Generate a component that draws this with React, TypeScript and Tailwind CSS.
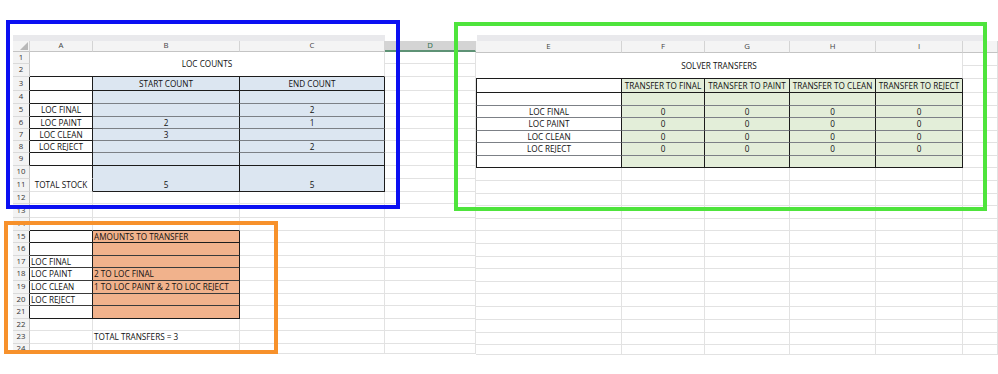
import React from 'react';

// border colour lookups (right / bottom)
const R: Record<string, string> = {
  g: 'border-r-[#e2e2e2]',
  k: 'border-r-[#1c1c1c]',
  n: 'border-r-transparent',
};
const B: Record<string, string> = {
  g: 'border-b-[#e2e2e2]',
  k: 'border-b-[#1c1c1c]',
  m: 'border-b-[#7c8086]',
  d: 'border-b-[#3a3a3a]',
  n: 'border-b-transparent',
};

const BLUE = 'bg-[#dce6f1]';
const GREEN = 'bg-[#e3eed9]';
const ORANGE = 'bg-[#f1b28c]';
const LEFT = 'items-center justify-start pl-[1px]';

type CellProps = {
  w: string;
  h: string;
  r?: string;
  b?: string;
  bg?: string;
  al?: string;
  l?: boolean;
  children?: React.ReactNode;
};

function Cell({ w, h, r = 'g', b = 'g', bg = 'bg-white', al = 'items-center justify-center', l, children }: CellProps) {
  return (
    <div
      className={`flex shrink-0 overflow-hidden whitespace-nowrap leading-[10px] border-r border-b ${R[r]} ${B[b]} ${
        l ? 'border-l border-l-[#1c1c1c]' : ''
      } ${w} ${h} ${bg} ${al}`}
    >
      {children}
    </div>
  );
}

function Num({ n, h, edge }: { n: number; h: string; edge?: boolean }) {
  return (
    <div
      className={`flex shrink-0 items-center justify-center w-[17px] ${h} border-r border-b border-b-[#dadada] ${
        edge ? 'border-r-[#1c1c1c]' : 'border-r-[#c6c6c6]'
      } bg-[#f3f3f3] text-[7.8px] text-[#333]`}
    >
      {n}
    </div>
  );
}

function Head({ w, h, t, sel }: { w: string; h: string; t: string; sel?: boolean }) {
  return (
    <div
      className={`flex shrink-0 items-center justify-center ${w} ${h} border-r border-r-[#d4d4d4] ${
        sel ? 'bg-[#d4d4d4] text-[#2f6e4b] border-b-2 border-b-[#5e9275]' : 'bg-[#f4f4f4] text-[#444] border-b border-b-[#c4c4c4]'
      } text-[7.8px]`}
    >
      {t}
    </div>
  );
}

type LC = { t?: string; r?: string; b?: string; bg?: string; al?: string };
type LRow = { n: number; h: string; edge?: boolean; a?: LC; bb?: LC; c?: LC };

const WA = 'w-[63px]';
const WB = 'w-[147px]';
const WC = 'w-[145px]';
const WD = 'w-[91px]';

const upper: LRow[] = [
  { n: 3, h: 'h-[14px]', edge: true, a: { r: 'k', b: 'k' }, bb: { t: 'START COUNT', r: 'k', b: 'k', bg: BLUE }, c: { t: 'END COUNT', r: 'k', b: 'k', bg: BLUE } },
  { n: 4, h: 'h-[13px]', edge: true, a: { r: 'k', b: 'k' }, bb: { r: 'k', b: 'm', bg: BLUE }, c: { r: 'k', b: 'm', bg: BLUE } },
  { n: 5, h: 'h-[13px]', edge: true, a: { t: 'LOC FINAL', r: 'k', b: 'k' }, bb: { r: 'k', b: 'm', bg: BLUE }, c: { t: '2', r: 'k', b: 'm', bg: BLUE } },
  { n: 6, h: 'h-[12px]', edge: true, a: { t: 'LOC PAINT', r: 'k', b: 'k' }, bb: { t: '2', r: 'k', b: 'm', bg: BLUE }, c: { t: '1', r: 'k', b: 'm', bg: BLUE } },
  { n: 7, h: 'h-[12px]', edge: true, a: { t: 'LOC CLEAN', r: 'k', b: 'k' }, bb: { t: '3', r: 'k', b: 'm', bg: BLUE }, c: { r: 'k', b: 'm', bg: BLUE } },
  { n: 8, h: 'h-[12px]', edge: true, a: { t: 'LOC REJECT', r: 'k', b: 'k' }, bb: { r: 'k', b: 'm', bg: BLUE }, c: { t: '2', r: 'k', b: 'm', bg: BLUE } },
  { n: 9, h: 'h-[13px]', edge: true, a: { r: 'k', b: 'k' }, bb: { r: 'k', b: 'k', bg: BLUE }, c: { r: 'k', b: 'k', bg: BLUE } },
];

const lower: LRow[] = [
  { n: 12, h: 'h-[12px]' },
  { n: 13, h: 'h-[14px]' },
  { n: 14, h: 'h-[13px]', a: { b: 'k' }, bb: { b: 'k' } },
  { n: 15, h: 'h-[12px]', edge: true, a: { r: 'k', b: 'k' }, bb: { t: 'AMOUNTS TO TRANSFER', r: 'k', b: 'k', bg: ORANGE, al: LEFT } },
  { n: 16, h: 'h-[13px]', edge: true, a: { r: 'k', b: 'd' }, bb: { r: 'k', b: 'd', bg: ORANGE } },
  { n: 17, h: 'h-[12px]', edge: true, a: { t: 'LOC FINAL', r: 'k', b: 'd', al: LEFT }, bb: { r: 'k', b: 'd', bg: ORANGE } },
  { n: 18, h: 'h-[13px]', edge: true, a: { t: 'LOC PAINT', r: 'k', b: 'd', al: LEFT }, bb: { t: '2 TO LOC FINAL', r: 'k', b: 'd', bg: ORANGE, al: LEFT } },
  { n: 19, h: 'h-[13px]', edge: true, a: { t: 'LOC CLEAN', r: 'k', b: 'd', al: LEFT }, bb: { t: '1 TO LOC PAINT & 2 TO LOC REJECT', r: 'k', b: 'd', bg: ORANGE, al: LEFT } },
  { n: 20, h: 'h-[12px]', edge: true, a: { t: 'LOC REJECT', r: 'k', b: 'd', al: LEFT }, bb: { r: 'k', b: 'd', bg: ORANGE } },
  { n: 21, h: 'h-[13px]', edge: true, a: { r: 'k', b: 'k' }, bb: { r: 'k', b: 'k', bg: ORANGE } },
  { n: 22, h: 'h-[12px]' },
  { n: 23, h: 'h-[13px]', bb: { t: 'TOTAL TRANSFERS = 3', al: LEFT } },
  { n: 24, h: 'h-[10px]' },
];

function LeftRow({ row }: { row: LRow }) {
  const cols: [string, LC | undefined][] = [
    [WA, row.a],
    [WB, row.bb],
    [WC, row.c],
  ];
  return (
    <div className="flex">
      <Num n={row.n} h={row.h} edge={row.edge} />
      {cols.map(([w, c], i) => (
        <Cell key={i} w={w} h={row.h} r={c?.r} b={c?.b} bg={c?.bg} al={c?.al}>
          {c?.t}
        </Cell>
      ))}
      <Cell w={WD} h={row.h} />
    </div>
  );
}

function LeftSheet() {
  return (
    <div className="flex w-[463px] shrink-0 flex-col">
      <div className="flex h-[6px]">
        <div className="w-[372px] bg-[#e9e9ec]" />
        <div className="w-[91px]" />
      </div>
      <div className="flex">
        <div className="flex h-[11px] w-[17px] shrink-0 items-end justify-end border-r border-b border-r-[#d4d4d4] border-b-[#c4c4c4] bg-[#f4f4f4] pr-[1px] pb-[1px]">
          <svg width="8" height="8" viewBox="0 0 8 8">
            <polygon points="8,0 8,8 0,8" fill="#b8b8b8" />
          </svg>
        </div>
        <Head w={WA} h="h-[11px]" t="A" />
        <Head w={WB} h="h-[11px]" t="B" />
        <Head w={WC} h="h-[11px]" t="C" />
        <Head w={WD} h="h-[11px]" t="D" sel />
      </div>

      {/* rows 1-2, merged title */}
      <div className="flex">
        <div className="flex flex-col">
          <Num n={1} h="h-[12px]" />
          <Num n={2} h="h-[13px]" />
        </div>
        <Cell w="w-[355px]" h="h-[25px]" r="g" b="k">
          LOC COUNTS
        </Cell>
        <div className="flex flex-col">
          <Cell w={WD} h="h-[12px]" />
          <Cell w={WD} h="h-[13px]" />
        </div>
      </div>

      {upper.map((r) => (
        <LeftRow key={r.n} row={r} />
      ))}

      {/* rows 10-11, merged totals */}
      <div className="flex">
        <div className="flex flex-col">
          <Num n={10} h="h-[13px]" />
          <Num n={11} h="h-[13px]" />
        </div>
        <div className="flex flex-col">
          <Cell w={WA} h="h-[13px]" r="k" b="n" />
          <Cell w={WA} h="h-[13px]" r="k" b="g">
            TOTAL STOCK
          </Cell>
        </div>
        <Cell w={WB} h="h-[26px]" r="k" b="k" bg={BLUE} al="items-end justify-center pb-[1px]">
          5
        </Cell>
        <Cell w={WC} h="h-[26px]" r="k" b="k" bg={BLUE} al="items-end justify-center pb-[1px]">
          5
        </Cell>
        <div className="flex flex-col">
          <Cell w={WD} h="h-[13px]" />
          <Cell w={WD} h="h-[13px]" />
        </div>
      </div>

      {lower.map((r) => (
        <LeftRow key={r.n} row={r} />
      ))}
    </div>
  );
}

const WE = 'w-[146px]';
const RW = ['w-[83px]', 'w-[85px]', 'w-[86px]', 'w-[87px]'];
const WJ = 'w-[35px]';

type RRow = { h: string; e?: string; v?: string; b: string; head?: boolean };

const rightTable: RRow[] = [
  { h: 'h-[14px]', b: 'k', head: true },
  { h: 'h-[13px]', b: 'm' },
  { h: 'h-[12px]', e: 'LOC FINAL', v: '0', b: 'm' },
  { h: 'h-[13px]', e: 'LOC PAINT', v: '0', b: 'm' },
  { h: 'h-[12px]', e: 'LOC CLEAN', v: '0', b: 'm' },
  { h: 'h-[13px]', e: 'LOC REJECT', v: '0', b: 'm' },
  { h: 'h-[12px]', b: 'k' },
];

const heads = ['TRANSFER TO FINAL', 'TRANSFER TO PAINT', 'TRANSFER TO CLEAN', 'TRANSFER TO REJECT'];

const restHeights = [
  'h-[13px]', 'h-[13px]', 'h-[12px]', 'h-[13px]', 'h-[12px]', 'h-[13px]', 'h-[13px]',
  'h-[12px]', 'h-[13px]', 'h-[12px]', 'h-[13px]', 'h-[13px]', 'h-[13px]', 'h-[12px]', 'h-[10px]',
];

function RightSheet() {
  return (
    <div className="flex w-[522px] shrink-0 flex-col">
      <div className="flex h-[6px]">
        <div className="w-[1px]" />
        <div className="w-[506px] bg-[#e9e9ec]" />
      </div>
      <div className="flex">
        <Head w={WE} h="h-[12px]" t="E" />
        <Head w={RW[0]} h="h-[12px]" t="F" />
        <Head w={RW[1]} h="h-[12px]" t="G" />
        <Head w={RW[2]} h="h-[12px]" t="H" />
        <Head w={RW[3]} h="h-[12px]" t="I" />
        <Head w={WJ} h="h-[12px]" t="" />
      </div>

      {/* rows 1-2, merged title */}
      <div className="flex">
        <Cell w="w-[487px]" h="h-[26px]" r="g" b="k">
          SOLVER TRANSFERS
        </Cell>
        <div className="flex flex-col">
          <Cell w={WJ} h="h-[13px]" />
          <Cell w={WJ} h="h-[13px]" />
        </div>
      </div>

      {rightTable.map((row, i) => (
        <div key={i} className="flex">
          <Cell w={WE} h={row.h} r="k" b={row.b} l>
            {row.e}
          </Cell>
          {RW.map((w, j) => (
            <Cell key={j} w={w} h={row.h} r="k" b={row.b} bg={GREEN}>
              {row.head ? heads[j] : row.v}
            </Cell>
          ))}
          <Cell w={WJ} h={row.h} />
        </div>
      ))}

      {restHeights.map((h, i) => (
        <div key={i} className="flex">
          <Cell w={WE} h={h} />
          {RW.map((w, j) => (
            <Cell key={j} w={w} h={h} />
          ))}
          <Cell w={WJ} h={h} />
        </div>
      ))}
    </div>
  );
}

export default function App() {
  return (
    <div className="relative h-[374px] w-[998px] overflow-hidden bg-white font-['Open_Sans',sans-serif] text-[8.2px] text-[#111]">
      <div className="flex pt-[35px]">
        <div className="w-[13px] shrink-0" />
        <LeftSheet />
        <RightSheet />
      </div>

      {/* highlight frames drawn over the sheet */}
      <div className="absolute left-[6px] top-[20px] h-[189px] w-[394px] border-4 border-[#0b10f2]" />
      <div className="absolute left-[454px] top-[22px] h-[189px] w-[533px] border-4 border-[#4ee43c]" />
      <div className="absolute left-[4px] top-[221px] h-[133px] w-[274px] border-4 border-[#f7912b]" />
    </div>
  );
}
